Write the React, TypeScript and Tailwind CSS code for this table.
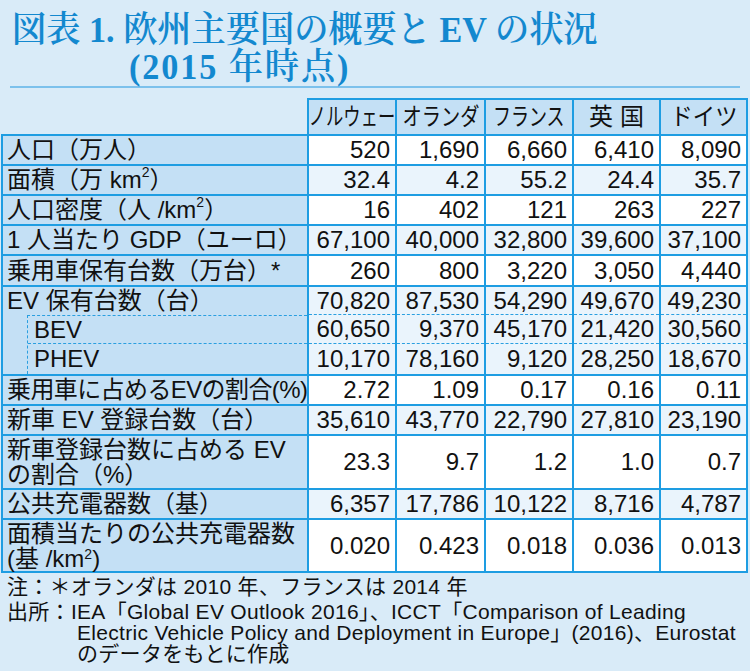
import React from 'react';

type RowDef = {
  label: React.ReactNode;
  vals: string[];
  h: string;
  bg: string;
  labelClass?: string;
};

const Sup = () => <span className="inline-block text-[14px] leading-none -translate-y-[8px]">2</span>;

const rowsTop: RowDef[] = [
  { label: '人口（万人）', vals: ['520', '1,690', '6,660', '6,410', '8,090'], h: 'h-[28px]', bg: 'bg-white' },
  { label: <>面積（万 km<Sup />）</>, vals: ['32.4', '4.2', '55.2', '24.4', '35.7'], h: 'h-[28px]', bg: 'bg-[#eaf4fc]' },
  { label: <>人口密度（人 /km<Sup />）</>, vals: ['16', '402', '121', '263', '227'], h: 'h-[28px]', bg: 'bg-white' },
  { label: '1 人当たり GDP（ユーロ）', vals: ['67,100', '40,000', '32,800', '39,600', '37,100'], h: 'h-[28px]', bg: 'bg-[#eaf4fc]' },
  { label: '乗用車保有台数（万台）*', vals: ['260', '800', '3,220', '3,050', '4,440'], h: 'h-[29px]', bg: 'bg-white' },
];

const rowsBottom: RowDef[] = [
  { label: '乗用車に占めるEVの割合(%)', vals: ['2.72', '1.09', '0.17', '0.16', '0.11'], h: 'h-[28px]', bg: 'bg-white', labelClass: 'tracking-[-0.6px]' },
  { label: '新車 EV 登録台数（台）', vals: ['35,610', '43,770', '22,790', '27,810', '23,190'], h: 'h-[28px]', bg: 'bg-[#eaf4fc]' },
  {
    label: (
      <span className="block leading-[25px]">
        新車登録台数に占める EV
        <br />
        の割合（%）
      </span>
    ),
    vals: ['23.3', '9.7', '1.2', '1.0', '0.7'],
    h: 'h-[52px]',
    bg: 'bg-white',
  },
  { label: '公共充電器数（基）', vals: ['6,357', '17,786', '10,122', '8,716', '4,787'], h: 'h-[28px]', bg: 'bg-[#eaf4fc]' },
  {
    label: (
      <span className="block leading-[25px]">
        面積当たりの公共充電器数
        <br />
        (基 /km<Sup />)
      </span>
    ),
    vals: ['0.020', '0.423', '0.018', '0.036', '0.013'],
    h: 'h-[51px]',
    bg: 'bg-white',
  },
];

const ev = {
  total: ['70,820', '87,530', '54,290', '49,670', '49,230'],
  bev: ['60,650', '9,370', '45,170', '21,420', '30,560'],
  phev: ['10,170', '78,160', '9,120', '28,250', '18,670'],
};

function Row({ r }: { r: RowDef }) {
  return (
    <div className={`grid grid-cols-[304px_86px_87px_86px_85px_85px] gap-[2px] ${r.h}`}>
      <div className={`bg-[#c4e0f5] flex items-center pl-[4px] whitespace-nowrap ${r.labelClass ?? ''}`}>{r.label}</div>
      {r.vals.map((v, i) => (
        <div key={i} className={`${r.bg} flex items-center justify-end pr-[5px]`}>
          {v}
        </div>
      ))}
    </div>
  );
}

export default function App() {
  return (
    <div className="w-[750px] h-[671px] bg-[#d9ebf8] overflow-hidden text-[#111]">
      {/* Title */}
      <div className="pt-[12px] pl-[12px] text-[#1388cf] text-[36px] leading-[37px] font-semibold font-['Liberation_Serif','Noto_Serif_CJK_JP','Noto_Sans_CJK_JP',serif] whitespace-nowrap">
        <div>
          <span className="inline-block origin-left scale-x-[0.95]">図表 1. 欧州主要国の概要と EV の状況</span>
        </div>
        <div className="pl-[117px]">
          <span className="inline-block origin-left scale-x-[0.95] tracking-[2px]">(2015 年時点)</span>
        </div>
      </div>
      <div className="mx-[10px] h-[2px] bg-[#7cc1ec]" />

      {/* Table */}
      <div className="mt-[10px] font-['Liberation_Sans','Noto_Sans_CJK_JP',sans-serif] text-[24px] leading-[26px]">
        <div className="flex">
          <div className="ml-[1px] w-[306px]" />
          <div className="bg-[#1e9de2] pt-[2px] px-[2px] grid grid-cols-[86px_87px_86px_85px_85px] gap-[2px]">
            <div className="h-[34px] bg-[#c4e0f5] flex items-center justify-center whitespace-nowrap">
              <span className="inline-block scale-x-[0.72]">ノルウェー</span>
            </div>
            <div className="h-[34px] bg-[#c4e0f5] flex items-center justify-center whitespace-nowrap">
              <span className="inline-block scale-x-[0.8]">オランダ</span>
            </div>
            <div className="h-[34px] bg-[#c4e0f5] flex items-center justify-center whitespace-nowrap">
              <span className="inline-block scale-x-[0.75]">フランス</span>
            </div>
            <div className="h-[34px] bg-[#c4e0f5] flex items-center justify-center whitespace-nowrap">
              <span className="inline-block tracking-[7px] pl-[7px]">英国</span>
            </div>
            <div className="h-[34px] bg-[#c4e0f5] flex items-center justify-center whitespace-nowrap">
              <span className="inline-block scale-x-[0.93]">ドイツ</span>
            </div>
          </div>
        </div>

        <div className="ml-[1px] w-[747px] bg-[#1e9de2] p-[2px] flex flex-col gap-[2px]">
          {rowsTop.map((r, i) => (
            <Row key={i} r={r} />
          ))}

          {/* EV group */}
          <div className="grid grid-cols-[304px_86px_87px_86px_85px_85px] gap-[2px] h-[87px]">
            <div className="bg-[#c4e0f5] flex flex-col whitespace-nowrap">
              <div className="h-[28px] flex items-center pl-[4px]">EV 保有台数（台）</div>
              <div className="ml-[24px] flex-1 border-l border-t border-dashed border-[#2a9fe0] flex flex-col">
                <div className="h-[28px] flex items-center pl-[6px] border-b border-dashed border-[#2a9fe0]">BEV</div>
                <div className="flex-1 flex items-center pl-[6px]">PHEV</div>
              </div>
            </div>
            {ev.total.map((v, i) => (
              <div key={i} className="bg-[#eaf4fc] flex flex-col">
                <div className="h-[28px] flex items-center justify-end pr-[5px] border-b border-dashed border-[#2a9fe0]">{v}</div>
                <div className="h-[29px] flex items-center justify-end pr-[5px] border-b border-dashed border-[#2a9fe0]">{ev.bev[i]}</div>
                <div className="flex-1 flex items-center justify-end pr-[5px]">{ev.phev[i]}</div>
              </div>
            ))}
          </div>

          {rowsBottom.map((r, i) => (
            <Row key={i} r={r} />
          ))}
        </div>
      </div>

      {/* Notes */}
      <div className="mt-[3px] pl-[7px] font-['Liberation_Sans','Noto_Sans_CJK_JP',sans-serif] text-[21px] leading-[21px] tracking-[0.3px] whitespace-nowrap">
        <div>注：＊オランダは 2010 年、フランスは 2014 年</div>
        <div className="mt-[4px]">出所：IEA「Global EV Outlook 2016」、ICCT「Comparison of Leading</div>
        <div className="pl-[70px]">Electric Vehicle Policy and Deployment in Europe」(2016)、Eurostat</div>
        <div className="pl-[70px]">のデータをもとに作成</div>
      </div>
    </div>
  );
}
